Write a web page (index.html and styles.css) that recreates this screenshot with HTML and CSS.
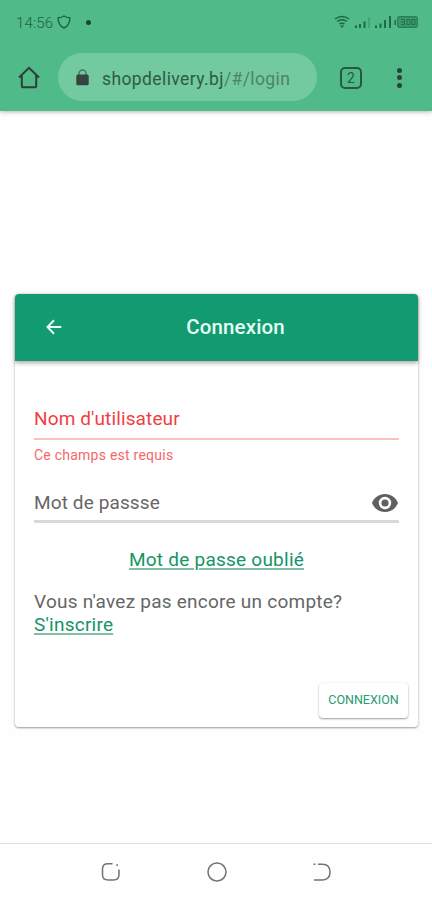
FILE: index.html
```html
<!DOCTYPE html>
<html lang="fr">
<head>
<meta charset="utf-8">
<title>Connexion</title>
<link rel="stylesheet" href="styles.css">
</head>
<body>
<header class="browser">
  <div class="status">
    <span class="time">14:56</span>
    <svg class="shield" width="14" height="14" viewBox="0 0 14 14"><path d="M7 1 Q9.5 2.7 12.8 2.7 Q13.2 10 7 13 Q.8 10 1.2 2.7 Q4.500 2.700 7 1Z"/></svg>
    <span class="dot"></span>
    <svg class="signals" width="84" height="14" viewBox="0 0 84 14">
      <g fill="none" stroke="#17673f" stroke-width="1.500"><path d="M1 4 Q8 -1 15 4M3.200 6.500 Q8 3 12.800 6.500M5.500 9 Q8 7.500 10.500 9"/></g>
      <path d="M6 10.500h4l-2 2.500z" fill="#17673f"/>
      <g fill="#1d6b45"><path d="M21 10.500h2v2.500h-2zM25 9h2v4h-2zM29.500 6.500h2v6.500h-2z"/><path d="M41 10.500h2v2.500h-2zM45.500 8.500h2v4.500h-2zM50 5h2v8h-2zM55 1h2v12h-2z"/></g>
      <path d="M34 2h2v11h-2z" fill="#43a577"/>
      <path d="M60.500 5h1.500v5h-1.500z" fill="#1d6b45"/>
      <rect x="63.700" y="1.700" width="19.600" height="10.600" rx="2" fill="#3b9b6d" stroke="#2a805a" stroke-width="1.400"/>
      <path d="M67 4.500h3.500v5H67M70.500 7H67M73 4.500h3v5h-3zM78 4.500h3v5h-3z" fill="none" stroke="#20704a"/>
    </svg>
  </div>
  <div class="toolbar">
    <svg class="home" width="22" height="23" viewBox="0 0 22 23"><path d="M1 11.500 11 1.800 21 11.500M3.800 9.500V20q0 1.200 1.200 1.200H17q1.200 0 1.200-1.200V9.500"/></svg>
    <div class="address">
      <svg width="13" height="17" viewBox="0 0 13 17"><path d="M3 6V4.500a3.500 3.500 0 0 1 7 0V6" fill="none" stroke="#467b60" stroke-width="1.500"/><rect x=".3" y="5.500" width="12.400" height="10.800" rx="1.500" fill="#36433f"/></svg>
      <span class="url"><span class="domain">shopdelivery.bj</span><span class="path">/#/login</span></span>
    </div>
    <div class="tabs">2</div>
    <div class="more"><i></i><i></i><i></i></div>
  </div>
</header>
<main>
  <section class="card">
    <div class="title-bar">
      <svg class="back" width="16" height="16" viewBox="0 0 16 16"><path d="M15.300 8H2M8 1.300 1.500 8 8 14.700"/></svg>
      <h1>Connexion</h1>
    </div>
    <form class="fields">
      <div class="field invalid"><label class="user">Nom d'utilisateur</label></div>
      <div class="error">Ce champs est requis</div>
      <div class="field password"><label class="pass">Mot de passse</label>
        <svg class="eye" width="26" height="18" viewBox="0 0 26 18"><path fill-rule="evenodd" d="M13 0C7.100 0 2 3.700 0 9c2 5.300 7.100 9 13 9s11-3.700 13-9C24 3.700 18.900 0 13 0Zm0 15.200a6.200 6.200 0 1 1 0-12.400 6.200 6.200 0 0 1 0 12.400Zm0-2.600a3.600 3.600 0 1 0 0-7.200 3.600 3.600 0 0 0 0 7.200Z"/></svg>
      </div>
      <p class="forgot"><a>Mot de passe oublié</a></p>
      <p class="register">Vous n'avez pas encore un compte?<br><a>S'inscrire</a></p>
    </form>
    <div class="actions"><button type="button">CONNEXION</button></div>
  </section>
</main>
<nav class="system">
  <svg width="20" height="20" viewBox="0 0 20 20"><path d="M11.500 1.800H7Q1.500 1.800 1.500 7v5.500q0 5.500 5.500 5.500h5.500q5.500 0 5.500-5.500V7.500M15.200 3h1.800"/></svg>
  <svg width="20" height="20" viewBox="0 0 20 20"><circle cx="10" cy="10" r="9"/></svg>
  <svg width="20" height="20" viewBox="0 0 20 20"><path d="M1.500 2.200h2M6 2.200h4.500q7.500 0 7.500 7.900t-7.500 7.900H2"/></svg>
</nav>
</body>
</html>
```
FILE: styles.css
```css
* { box-sizing: border-box; }
body {
  margin: 0;
  height: 900px;
  display: flex;
  flex-direction: column;
  background: #fefefe;
  font-family: Roboto, "Liberation Sans", sans-serif;
  overflow: hidden;
}
.browser {
  height: 111px;
  flex: none;
  background: #50ba89;
  box-shadow: 0 1px 4px rgba(60, 40, 30, .35);
}
.status {
  height: 44px;
  padding: 0 14px 0 16px;
  display: flex;
  align-items: center;
}
.time { width: 36px; padding-top: 1px; font-size: 15px; letter-spacing: .15px; font-weight: 300; color: #1b6542; white-space: nowrap; }
.shield { margin-left: 5px; fill: none; stroke: #1d6745; stroke-width: 1.500; }
.dot { width: 5px; height: 5px; margin-left: 15px; border-radius: 50%; background: #17472f; }
.signals { margin-left: auto; }
.toolbar {
  height: 67px;
  padding: 0 30px 0 18px;
  display: flex;
  align-items: center;
}
.toolbar > * { flex: none; }
.home { fill: none; stroke: #303c3b; stroke-width: 2; }
.address {
  width: 259px;
  height: 48px;
  margin: 0 0 1px 18px;
  padding-left: 18px;
  border-radius: 24px;
  background: #73c9a0;
  display: flex;
  align-items: center;
  gap: 13px;
}
.url { font-size: 17.500px; letter-spacing: .4px; white-space: nowrap; padding-top: 3px; }
.domain { color: #2d5c45; }
.path { color: #4b8468; }
.tabs {
  width: 22px;
  height: 22px;
  margin-left: 23px;
  border: 2px solid #2b5742;
  border-radius: 5px;
  color: #2b5742;
  font-size: 14px;
  line-height: 18px;
  text-align: center;
}
.more {
  margin-left: auto;
  display: flex;
  flex-direction: column;
  gap: 2.500px;
}
.more i { width: 5px; height: 5px; border-radius: 50%; background: #2b4238; }
main { flex: 1; padding: 183px 14px 0 15px; }
.card {
  height: 433px;
  border-radius: 4px;
  background: #fff;
  box-shadow: 0 1px 2px rgba(0, 0, 0, .35), 0 0 4px rgba(0, 0, 0, .09);
  display: flex;
  flex-direction: column;
}
.title-bar {
  height: 67px;
  padding: 0 31px;
  display: flex;
  align-items: center;
  border-radius: 4px 4px 0 0;
  background: #129a70;
  box-shadow: 0 2px 4px rgba(40, 0, 20, .36);
}
.back { margin-bottom: 1px; fill: none; stroke: #e3fff5; stroke-width: 2; }
h1 { flex: 1; margin: 0 0 2px 22px; text-align: center; color: #e6fff6; font-size: 20.500px; letter-spacing: .15px; font-weight: 500; line-height: 24px; }
.fields { padding: 34px 19px 0; color: #666; font-size: 19px; letter-spacing: .24px; }
.field { height: 45px; display: flex; align-items: center; white-space: nowrap; }
.user, .pass { letter-spacing: .12px; }
.invalid { padding-top: 4px; color: #f23d43; border-bottom: 2px solid #fac0c2; }
.error { height: 37px; padding-top: 7px; color: #f4686b; font-size: 14px; line-height: 16px; }
.password { padding-top: 8px; justify-content: space-between; border-bottom: 3px solid #d8d8d8; height: 46px; }
.eye { fill: #606060; margin-right: 1px; }
.forgot { margin: 25px 0 0; text-align: center; line-height: 24px; }
.fields a { color: #169466; text-decoration: underline; text-decoration-color: #82bea5; text-decoration-thickness: 2px; text-underline-offset: 2px; }
.register { margin: 18px 0 0; line-height: 23px; white-space: nowrap; }
.actions { margin-top: auto; padding: 0 10px 9px; display: flex; justify-content: flex-end; }
button {
  width: 89px;
  height: 35px;
  padding: 0 0 2px;
  border: 0;
  border-radius: 4px;
  background: #fff;
  color: #299a72;
  font: 400 12.500px Roboto, sans-serif;
  box-shadow: 0 1px 2px rgba(0, 0, 0, .38), 0 0 3px rgba(0, 0, 0, .04);
}
.system {
  height: 57px;
  border-top: 1px solid #dedede;
  padding: 0 100px 0 101px;
  display: flex;
  align-items: center;
  justify-content: space-between;
}
.system svg { fill: none; stroke: #737373; stroke-width: 1.500; }
```
